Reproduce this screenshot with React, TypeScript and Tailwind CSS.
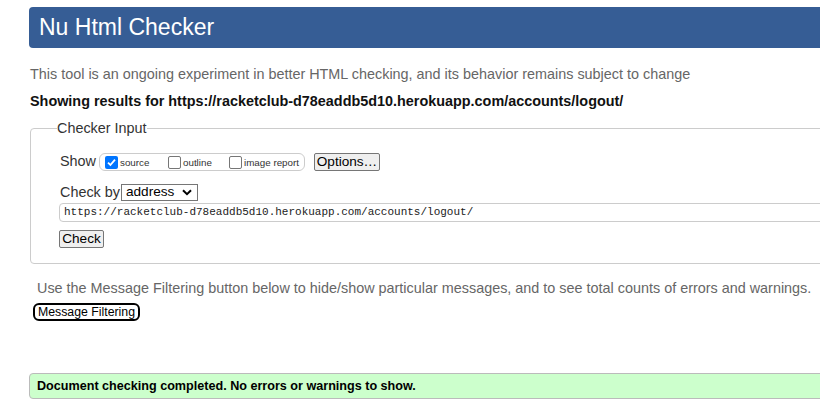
const sans = { fontFamily: '"Liberation Sans", Arial, sans-serif' };

function Box({ checked, label }: { checked?: boolean; label: string }): React.JSX.Element {
  return (
    <span className="flex items-center">
      {checked ? (
        <span className="flex h-[13px] w-[13px] items-center justify-center rounded-[2px] bg-[#0075ff]">
          <svg width="11" height="11" viewBox="0 0 11 11">
            <path d="M2 5.6 L4.4 8 L9 2.6" fill="none" stroke="#fff" strokeWidth="1.8" />
          </svg>
        </span>
      ) : (
        <span className="h-[13px] w-[13px] rounded-[2px] border border-[#767676] bg-white" />
      )}
      <span className="ml-[2px] pt-[2px] text-[9.8px] text-[#333]">{label}</span>
    </span>
  );
}

function GrayButton({ label, w }: { label: string; w: string }): React.JSX.Element {
  return (
    <span className={`flex h-[18px] items-center justify-center rounded-[2px] border border-[#767676] bg-[#efefef] text-[13.6px] text-black ${w}`}>
      {label}
    </span>
  );
}

export default function App(): React.JSX.Element {
  return (
    <div className="h-[412px] w-[820px] overflow-hidden bg-white" style={sans}>
      <div className="ml-[29px] flex w-[880px] flex-col">
        <h1 className="mt-[7px] flex h-[41px] items-center rounded-l-[4px] bg-[#365d95] pl-[10px] text-[23px] font-normal text-white">
          Nu Html Checker
        </h1>
        <p className="mt-[18px] pl-[1px] text-[14.4px] leading-4 text-[#666]">
          This tool is an ongoing experiment in better HTML checking, and its behavior remains subject to change
        </p>
        <p className="mt-[11px] pl-[1px] text-[14.4px] font-bold leading-4 text-[#111]">
          Showing results for https://racketclub-d78eaddb5d10.herokuapp.com/accounts/logout/
        </p>
        <fieldset className="ml-[1px] mt-[11px] rounded-[4px] border border-[#ccc] pb-[15px]">
          <legend className="ml-[26px] text-[14.4px] leading-4 text-[#333]">Checker Input</legend>
          <div className="flex flex-col pl-[29px]">
            <div className="mt-[17px] flex h-[18px] items-center">
              <span className="text-[14.4px] text-[#333]">Show</span>
              <span className="ml-[3px] flex h-[18px] w-[206px] items-center rounded-[6px] border border-[#ccc] pl-[5px]">
                <span className="w-[63px]"><Box checked label="source" /></span>
                <span className="w-[61px]"><Box label="outline" /></span>
                <Box label="image report" />
              </span>
              <span className="ml-[9px]"><GrayButton label="Options…" w="w-[66px]" /></span>
            </div>
            <div className="mt-[13px] flex h-[17px] items-center">
              <span className="text-[14.4px] text-[#333]">Check by</span>
              <span className="ml-[1px] flex h-[17px] w-[77px] items-center justify-between border border-[#767676] bg-white pl-[4px] pr-[5px] text-[13.6px] text-black">
                address
                <svg width="10" height="7" viewBox="0 0 10 7">
                  <path d="M1 1.2 L5 5.2 L9 1.2" fill="none" stroke="#000" strokeWidth="2" />
                </svg>
              </span>
            </div>
            <div
              className="-ml-[1px] mt-[2px] flex h-[19px] items-center rounded-[4px] border border-[#ccc] pl-[4px] text-[11px] text-[#222]"
              style={{ fontFamily: '"Liberation Mono", "DejaVu Sans Mono", monospace' }}
            >
              https://racketclub-d78eaddb5d10.herokuapp.com/accounts/logout/
            </div>
            <div className="-ml-[1px] mt-[8px] flex">
              <GrayButton label="Check" w="w-[45px]" />
            </div>
          </div>
        </fieldset>
        <p className="ml-[8px] mt-[16px] text-[14.4px] leading-4 text-[#666]">
          Use the Message Filtering button below to hide/show particular messages, and to see total counts of errors and warnings.
        </p>
        <div className="ml-[4px] mt-[7px] flex">
          <span className="flex h-[18px] w-[107px] items-center justify-center rounded-[6px] border-2 border-black bg-white text-[12.3px] text-black">
            Message Filtering
          </span>
        </div>
        <div className="mt-[52px] flex h-[26px] items-center rounded-l-[4px] border border-[#bbb] bg-[#ccffcc] pl-[7px] text-[12.6px] font-bold text-black">
          Document checking completed. No errors or warnings to show.
        </div>
      </div>
    </div>
  );
}
